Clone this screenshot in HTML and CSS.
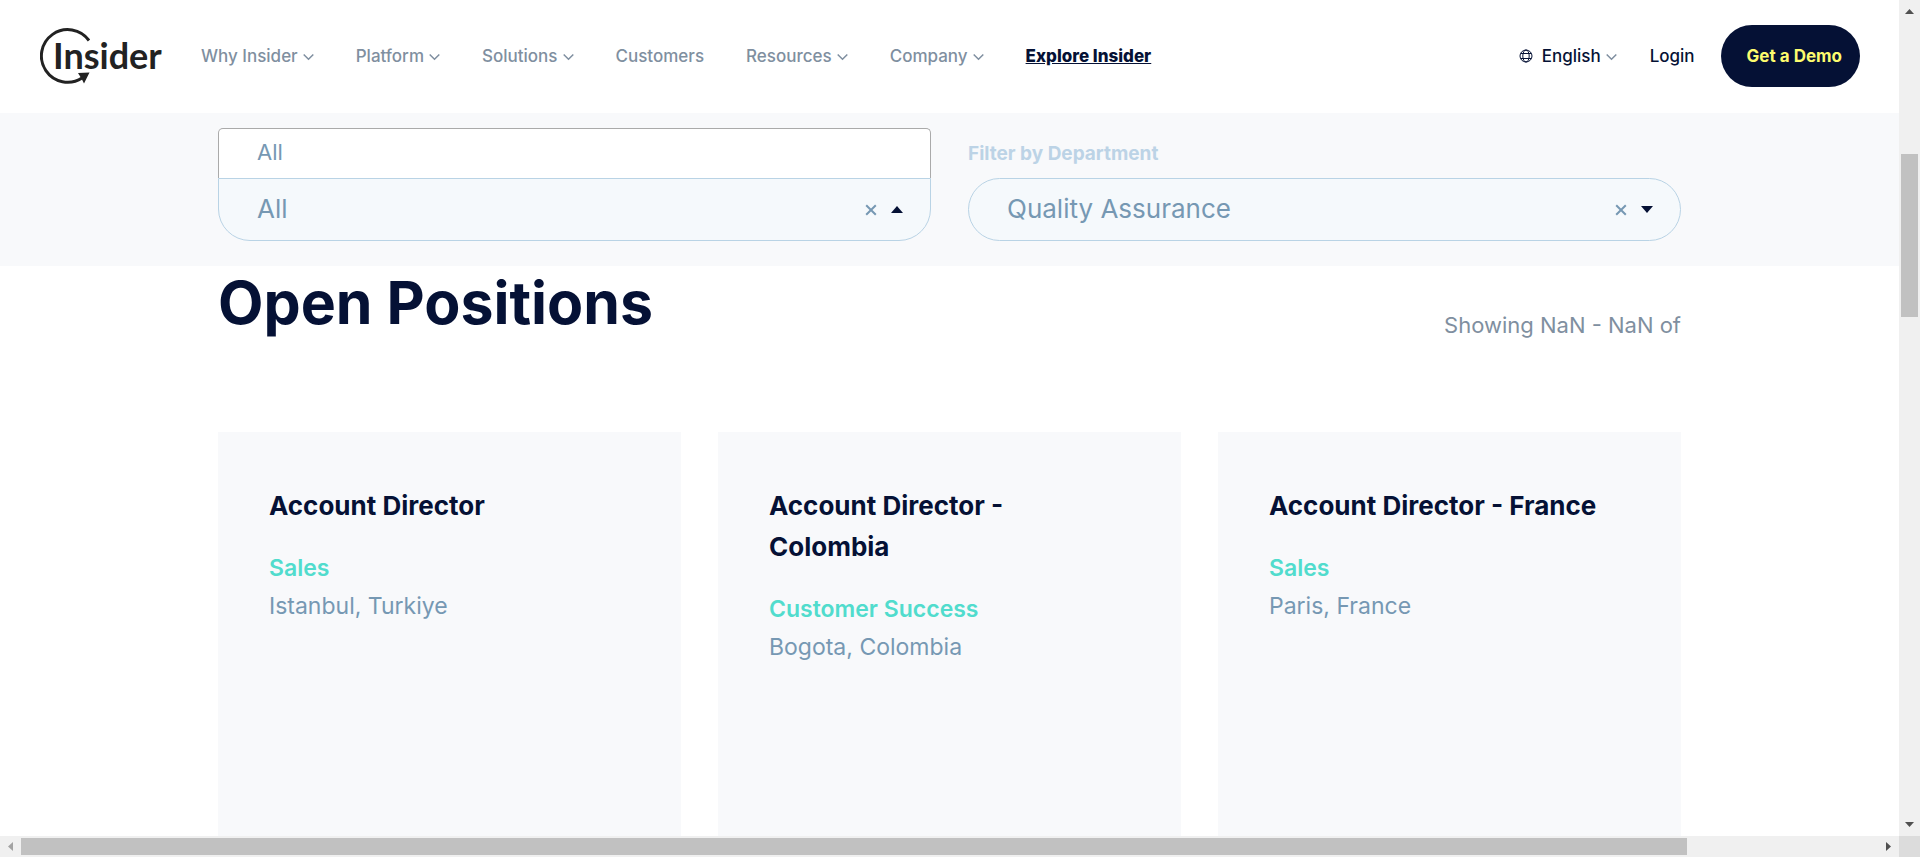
FILE: index.html
```html
<!DOCTYPE html>
<html lang="en">
<head>
<meta charset="utf-8">
<title>Insider - Open Positions</title>
<link rel="stylesheet" href="styles.css">
</head>
<body>
<div class="window">
  <div class="page">
    <header class="header">
      <a class="logo" href="#" aria-label="Insider home">
        <svg width="124" height="60" viewBox="40 26 124 60">
          <path d="M89 40.500A26.300 26.300 0 1 0 82 78" fill="none" stroke="#222" stroke-width="3"/>
          <path d="M78 73L89.500 72.500L84 83.500L82 79.500Z" fill="#222"/>
          <text class="logo-text" x="53" y="69">Insider</text>
        </svg>
      </a>
      <nav class="nav">
        <a class="nav-link" href="#">Why Insider <svg class="chevron" viewBox="0 0 11 8"><path d="M.7 1.500L5.500 6.300L10.300 1.500"/></svg></a>
        <a class="nav-link" href="#">Platform <svg class="chevron" viewBox="0 0 11 8"><path d="M.7 1.500L5.500 6.300L10.300 1.500"/></svg></a>
        <a class="nav-link" href="#">Solutions <svg class="chevron" viewBox="0 0 11 8"><path d="M.7 1.500L5.500 6.300L10.300 1.500"/></svg></a>
        <a class="nav-link" href="#">Customers</a>
        <a class="nav-link" href="#">Resources <svg class="chevron" viewBox="0 0 11 8"><path d="M.7 1.500L5.500 6.300L10.300 1.500"/></svg></a>
        <a class="nav-link" href="#">Company <svg class="chevron" viewBox="0 0 11 8"><path d="M.7 1.500L5.500 6.300L10.300 1.500"/></svg></a>
        <a class="nav-link nav-explore" href="#">Explore Insider</a>
      </nav>
      <div class="actions">
        <a class="action-link language" href="#">
          <svg class="globe" viewBox="0 0 14 14"><circle cx="7" cy="7" r="6"/><ellipse cx="7" cy="7" rx="3.200" ry="6"/><path d="M1.700 4.500H12.300M1.700 9.500H12.300"/></svg>
          English
          <svg class="chevron" viewBox="0 0 11 8"><path d="M.7 1.500L5.500 6.300L10.300 1.500"/></svg>
        </a>
        <a class="action-link" href="#">Login</a>
        <a class="demo" href="#">Get a Demo</a>
      </div>
    </header>

    <section class="filters">
      <div class="container filter-grid">
        <div class="filter">
          <ul class="options" role="listbox" aria-label="Locations">
            <li class="option" role="option" aria-selected="true">All</li>
          </ul>
          <div class="field field-open">
            <select class="select" aria-label="Filter by Location"><option>All</option></select>
            <button class="clear" type="button" aria-label="Clear location"><svg width="12" height="12" viewBox="0 0 12 12"><path d="M1.200 1.200L10.800 10.800M10.800 1.200L1.200 10.800"/></svg></button>
            <svg class="caret" viewBox="0 0 12 7"><path d="M0 7L6 0L12 7Z"/></svg>
          </div>
        </div>
        <div class="filter">
          <label class="filter-label" for="department">Filter by Department</label>
          <div class="field">
            <select class="select" id="department"><option>Quality Assurance</option></select>
            <button class="clear" type="button" aria-label="Clear department"><svg width="12" height="12" viewBox="0 0 12 12"><path d="M1.200 1.200L10.800 10.800M10.800 1.200L1.200 10.800"/></svg></button>
            <svg class="caret" viewBox="0 0 12 7"><path d="M0 0L6 7L12 0Z"/></svg>
          </div>
        </div>
      </div>
    </section>

    <main class="container">
      <div class="list-head">
        <h1 class="title">Open Positions</h1>
        <p class="count">Showing NaN - NaN of</p>
      </div>
      <div class="cards">
        <article class="card">
          <h2 class="card-title">Account Director</h2>
          <p class="department">Sales</p>
          <p class="location">Istanbul, Turkiye</p>
        </article>
        <article class="card">
          <h2 class="card-title">Account Director - Colombia</h2>
          <p class="department">Customer Success</p>
          <p class="location">Bogota, Colombia</p>
        </article>
        <article class="card">
          <h2 class="card-title">Account Director - France</h2>
          <p class="department">Sales</p>
          <p class="location">Paris, France</p>
        </article>
      </div>
    </main>
  </div>

  <div class="scrollbar scrollbar-y" aria-hidden="true">
    <svg class="arrow" viewBox="0 0 21 21"><path d="M6 14L10.500 9L15 14Z"/></svg>
    <div class="track track-y"><div class="thumb thumb-y"></div></div>
    <svg class="arrow" viewBox="0 0 21 21"><path d="M6 7L10.500 12L15 7Z"/></svg>
  </div>
  <div class="scrollbar scrollbar-x" aria-hidden="true">
    <svg class="arrow arrow-off" viewBox="0 0 21 21"><path d="M13 6L8 10.500L13 15Z"/></svg>
    <div class="track track-x"><div class="thumb thumb-x"></div></div>
    <svg class="arrow" viewBox="0 0 21 21"><path d="M8 6L13 10.500L8 15Z"/></svg>
  </div>
  <div class="corner"></div>
</div>
</body>
</html>
```
FILE: styles.css
```css
* { box-sizing: border-box; }

body {
  margin: 0;
  font-family: Inter, "Liberation Sans", sans-serif;
  color: #051135;
  background: #fff;
}

h1, h2, p, ul { margin: 0; padding: 0; }
a { color: inherit; text-decoration: none; }

.window {
  display: grid;
  grid-template-columns: minmax(0, 1fr) 21px;
  grid-template-rows: minmax(0, 1fr) 21px;
  height: 100vh;
}

.page { overflow: hidden; }

/* Header */
.header {
  display: flex;
  align-items: center;
  padding: 25px 39px 26px 40px;
}

.logo { display: flex; }
.logo-text { font: 700 36px Lato, sans-serif; fill: #222; }

.nav {
  display: flex;
  gap: 42px;
  margin-left: 37px;
  font-size: 17px;
  font-weight: 500;
  color: #7f8fa0;
}

.nav-link {
  display: flex;
  align-items: center;
  gap: 5px;
  white-space: nowrap;
}

.nav-explore {
  font-weight: 800;
  color: #051135;
  text-decoration: underline;
}

.chevron {
  width: 11px;
  height: 8px;
  margin-top: 2px;
  fill: none;
  stroke: #7f8fa0;
  stroke-width: 1.5;
}

.actions {
  display: flex;
  align-items: center;
  margin-left: auto;
  font-size: 17px;
  font-weight: 500;
}

.action-link {
  display: flex;
  align-items: center;
  margin-right: 26px;
}

.language { gap: 5px; margin-right: 33px; }

.globe {
  width: 14px;
  height: 14px;
  margin-right: 4px;
  fill: none;
  stroke: #051135;
}

.demo {
  padding: 20px 18px 20px 26px;
  border-radius: 31px;
  background: #051135;
  color: #fdfc6e;
  font-weight: 700;
  line-height: 22px;
}

/* Filters */
.container {
  width: 78%;
  max-width: 1463px;
  margin: 0 auto;
}

.filters { padding: 15px 0 25px; background: #f8f9fb; }

.filter-grid {
  display: grid;
  grid-template-columns: 1fr 1fr;
  gap: 37px;
}

.options {
  height: 50px;
  border: 1px solid #aaa;
  border-bottom: 0;
  border-radius: 5px 5px 0 0;
  background: #fff;
  list-style: none;
}

.option {
  padding: 0 38px;
  font-size: 22px;
  line-height: 46px;
  color: #7698b3;
}

.filter-label {
  display: block;
  padding-top: 2px;
  font-size: 19px;
  font-weight: 700;
  line-height: 48px;
  color: #bcd3e6;
}

.field {
  display: flex;
  align-items: center;
  height: 63px;
  padding: 0 27px 0 38px;
  border: 1px solid #b9d3e5;
  border-radius: 32px;
  background: #f5f9fc;
}

.field-open { border-radius: 0 0 32px 32px; }

.select {
  flex: 1;
  min-width: 0;
  height: 60px;
  padding: 0 0 2px;
  border: 0;
  background: transparent;
  appearance: none;
  font: 400 26px Inter, "Liberation Sans", sans-serif;
  color: #7698b3;
}

.clear {
  display: flex;
  padding: 0;
  margin-right: 14px;
  border: 0;
  background: transparent;
  stroke: #7698b3;
  stroke-width: 2;
}

.caret { width: 12px; height: 7px; fill: #051135; }

/* Positions */
.list-head {
  display: flex;
  align-items: flex-end;
  justify-content: space-between;
  padding-top: 2px;
}

.title { font-size: 59px; font-weight: 700; line-height: 70px; }
.count { font-size: 22px; line-height: 26px; color: #7f8fa0; }

.cards {
  display: grid;
  grid-template-columns: repeat(3, 1fr);
  gap: 37px;
  margin-top: 94px;
}

.card {
  min-height: 460px;
  padding: 53px 68px 53px 51px;
  background: #f8f9fb;
}

.card-title {
  margin-bottom: 23px;
  font-size: 26px;
  font-weight: 700;
  line-height: 41px;
}

.department {
  font-size: 23px;
  font-weight: 600;
  line-height: 38px;
  color: #51dccd;
}

.location { font-size: 23px; line-height: 38px; color: #7698b3; }

/* Scrollbars */
.scrollbar { display: flex; background: #f0f0f0; }
.scrollbar-y { flex-direction: column; }
.arrow { flex: none; width: 21px; height: 21px; fill: #505050; }
.arrow-off { fill: #a3a3a3; }
.track { flex: 1; display: flex; }
.track-y { flex-direction: column; padding: 133px 2px 0; }
.track-x { padding: 2px 191px 2px 0; }
.thumb { background: #c1c1c1; }
.thumb-y { height: 163px; }
.thumb-x { flex: 1; }
.corner { background: #dcdcdc; }
```
